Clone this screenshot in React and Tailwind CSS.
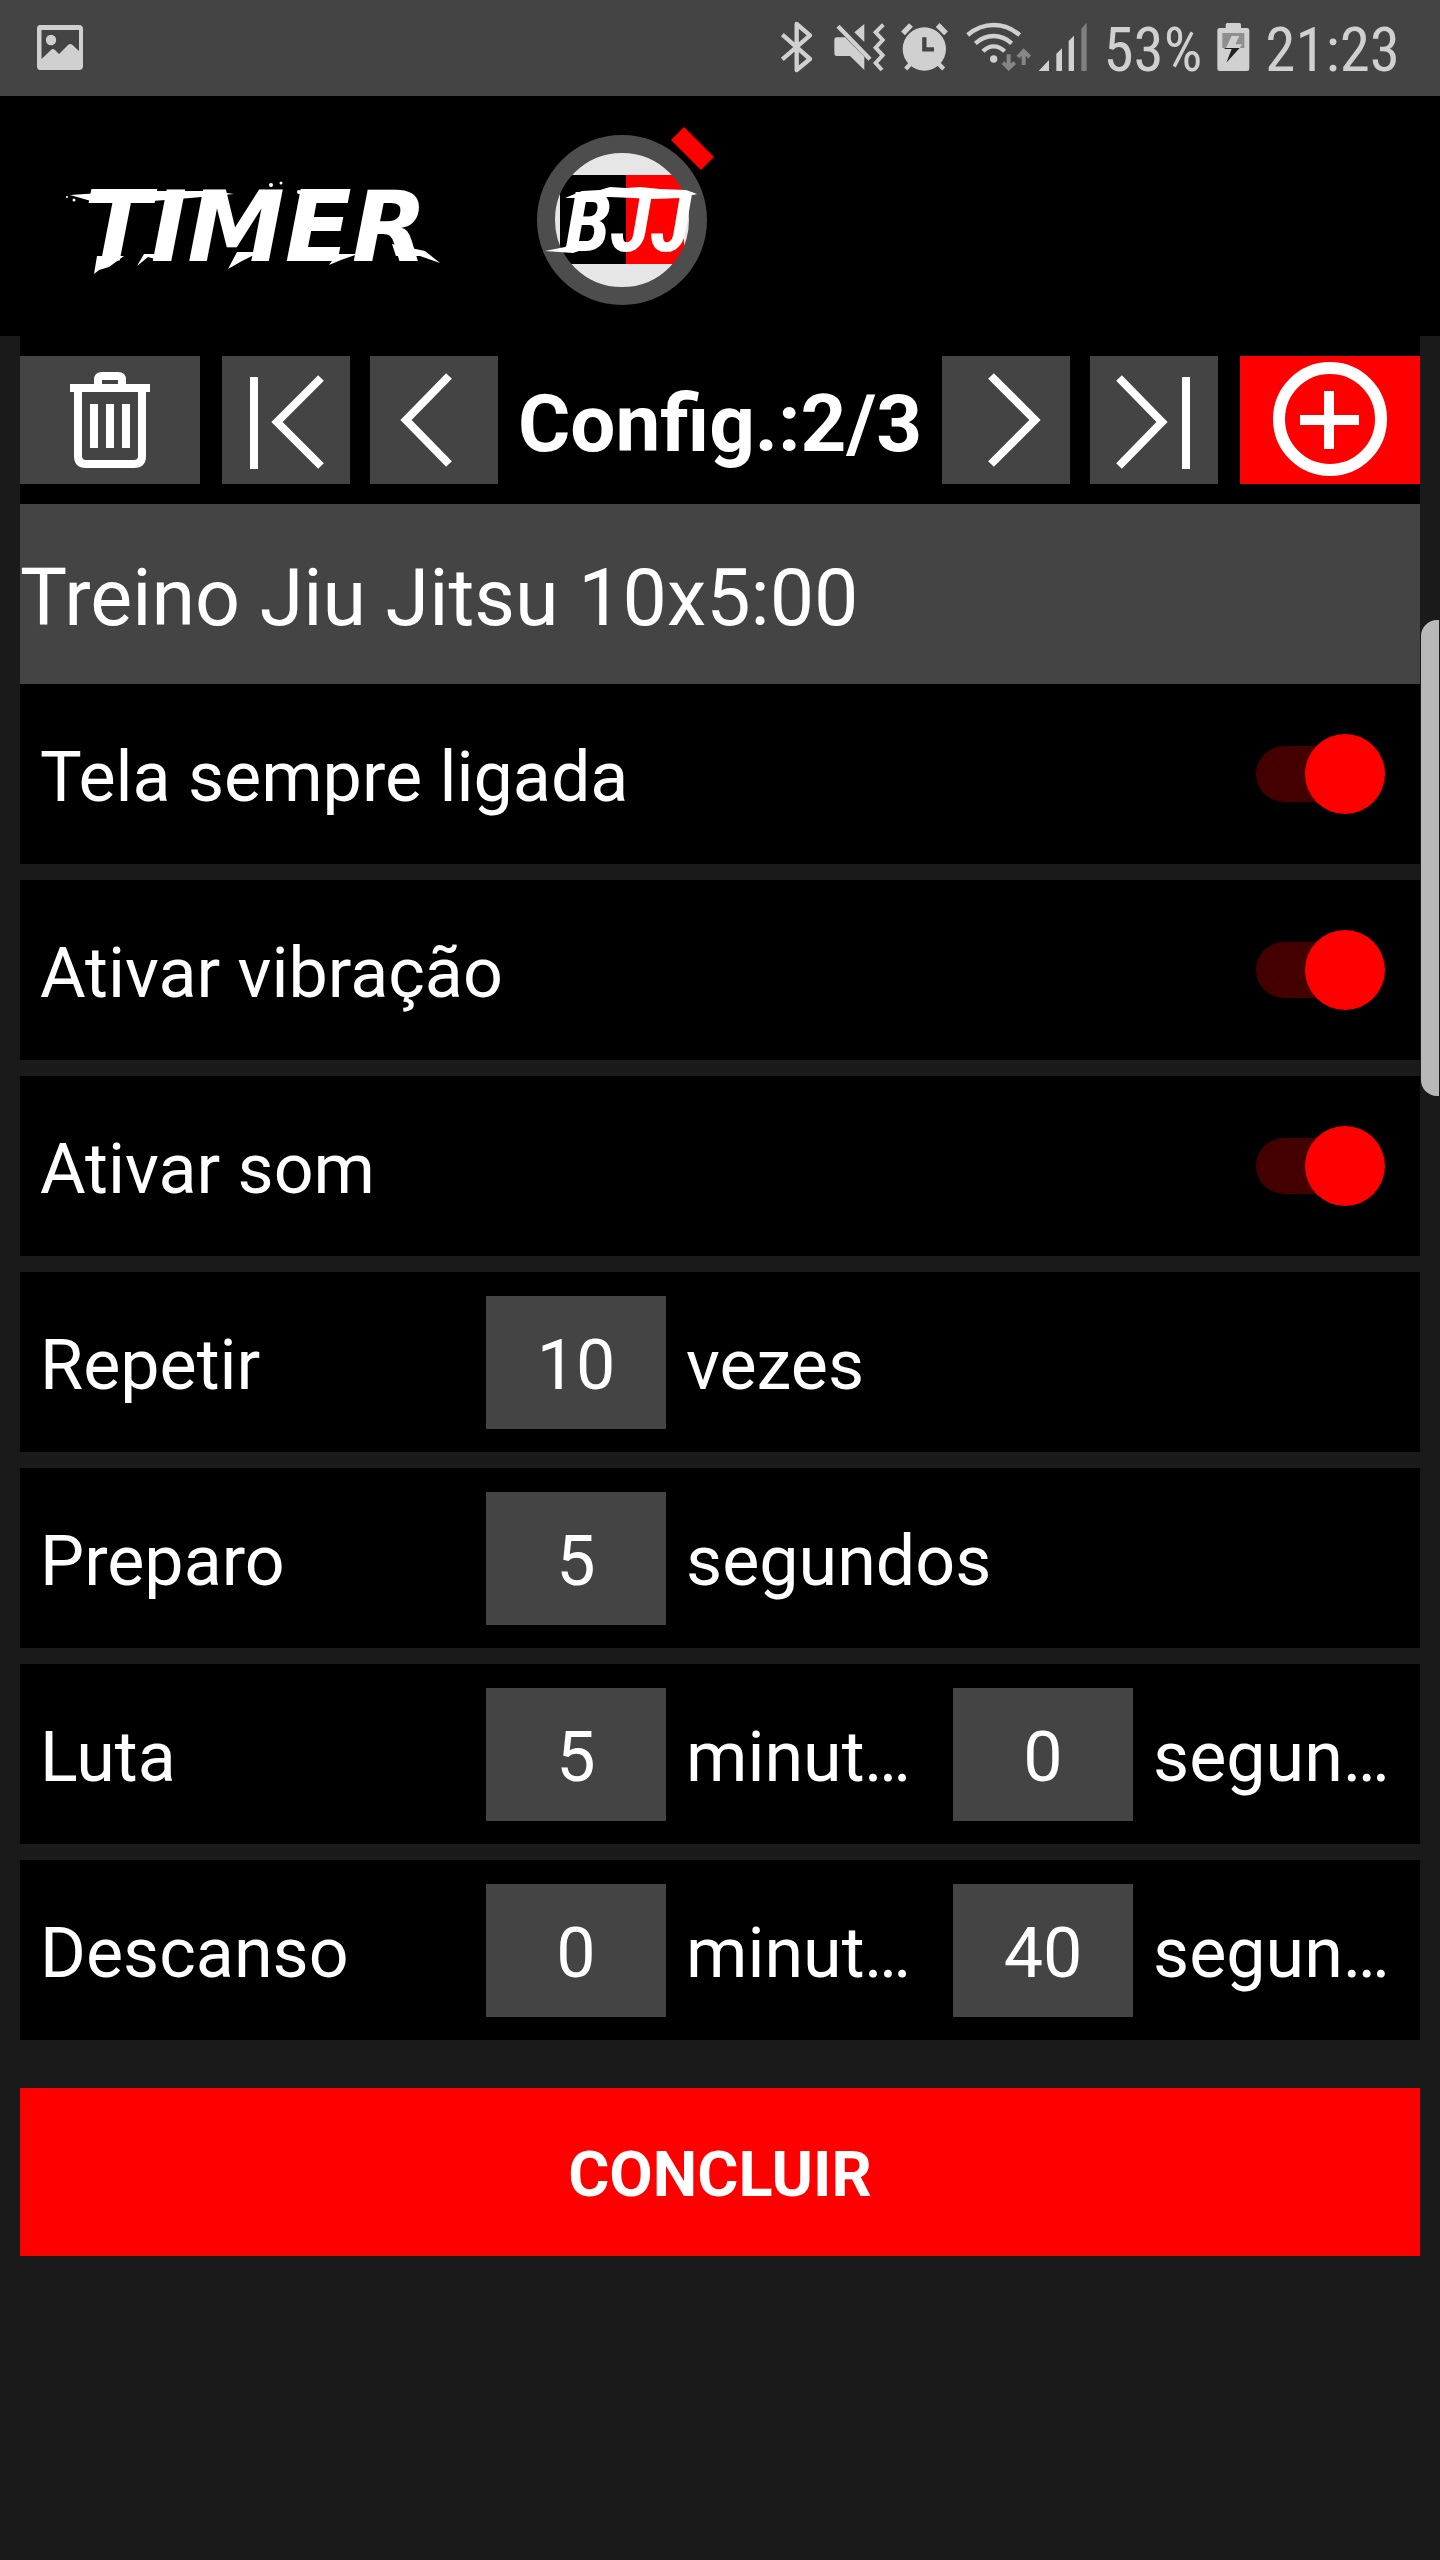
import React, { useState } from 'react';

const ImageIcon = () => (
  <svg className="w-12 h-12" viewBox="0 0 48 48" fill="currentColor" aria-hidden="true">
    <path
      fillRule="evenodd"
      d="M4 1H43Q47 1 47 5V42Q47 46 43 46H4Q1 46 1 42V5Q1 1 4 1ZM5.500 6V35L15 26Q17 24 19 26L23 30L32 21Q34 19 36.500 21L43 27V6Z"
    />
    <circle cx="15" cy="16" r="5.200" />
  </svg>
);

const SignalIcons = () => (
  <svg className="w-[308px] h-24" viewBox="27 -30 924 288" fill="none" stroke="currentColor" strokeWidth="13" aria-hidden="true">
    {/* Bluetooth */}
    <path d="M34 74L117 147L77 180V42L117 76L34 148" strokeLinejoin="round" />

    {/* Muted speaker with vibration */}
    <g fill="currentColor" stroke="none">
      <path d="M197 82H222L280 140V180L237 138H197Q190 138 190 131V89Q190 82 197 82Z" />
      <path d="M280 42V96L250 67Z" />
    </g>
    <path d="M201 49L297 148" />
    <path d="M337 44L314 67L335 90L314 113L335 136L314 159L333 180" strokeWidth="12" />

    {/* Alarm clock */}
    <circle cx="460" cy="117" r="65" fill="currentColor" stroke="none" />
    <path d="M396 70L420 45M500 45L525 70" strokeWidth="16" />
    <path d="M404 177L430 150M518 177L492 150" />
    <path d="M460 82V118H489" stroke="#444" />

    {/* Wi-fi */}
    <path d="M590 75Q625 45 668 45T746 75M613 100Q638 78 668 78T722 100M636 124Q650 109 668 109T701 124" />
    <circle cx="668" cy="147" r="11" fill="currentColor" stroke="none" />
    <path d="M713 133V175M696 158L713 175L731 158M758 165V123M741 141L758 123L776 141" stroke="#868686" strokeWidth="12" />

    {/* Mobile signal */}
    <path d="M803 183L834 150V183ZM856 183V131L873 115V183ZM893 183V93L909 77V183Z" fill="currentColor" stroke="none" />
    <path d="M931 183V56L947 38V183Z" fill="#808080" stroke="none" />
  </svg>
);

const BatteryIcon = () => (
  <svg className="w-[33px] h-24" viewBox="383 -30 99 288" aria-hidden="true">
    <path d="M409 54V44Q409 39 414 39H450Q455 39 455 44V54H473Q480 54 480 61V176Q480 183 473 183H391Q384 183 384 176V61Q384 54 391 54Z" fill="currentColor" />
    <path d="M399 69H465V114H399Z" fill="#8f8f8f" />
    <path d="M427 78H450L438 103H459L451 114H410Z" fill="currentColor" />
    <path d="M406 114H451L411 158L427 117H406Z" fill="#222" />
  </svg>
);

const StatusBar = () => (
  <div className="h-24 bg-[#444] pl-9 pr-10 flex items-center justify-between text-[#d0d0d0]">
    <ImageIcon />
    <div className="flex items-center gap-[15px] font-['Roboto_Condensed',Roboto,sans-serif] text-[61px] leading-none">
      <SignalIcons />
      <span className="pt-1">53%</span>
      <BatteryIcon />
      <span className="pt-1">21:23</span>
    </div>
  </div>
);

const Header = () => (
  <header className="bg-black">
    <svg className="w-[740px] h-60" viewBox="0 0 740 240" fill="#fff" role="img" aria-label="Timer BJJ">
      <text x="84" y="165" fontSize="98" fontWeight="bold" fontStyle="italic" fontFamily="DejaVu Sans">
        TIMER
      </text>
      {/* Brush streaks and drips */}
      <path d="M70 99L100 97L128 95L212 95L234 98L190 102L128 107L98 107L84 103Z" />
      <path d="M94 178L97 160L124 160L109 171L99 174Z" />
      <path d="M137 170L144 158L168 158L155 163L148 161Z" />
      <path d="M228 173L237 156L260 156L242 165Z" />
      <path d="M329 169L337 158L358 158L341 164Z" />
      <path d="M392 148L425 155L440 167L420 160L396 160Z" />
      <circle cx="67" cy="101" r="1" />
      <circle cx="74" cy="104" r="1.500" />
      <circle cx="271" cy="89" r="2" />
      <circle cx="281" cy="87" r="1.500" />
      <circle cx="299" cy="96" r="2" />

      <circle cx="622" cy="124" r="76" fill="#e6e6e6" />
      <path d="M560 79H626V168H560Z" fill="#000" />
      <path d="M626 79H684V168H626Z" fill="#f00" />
      <circle cx="622" cy="124" r="76" fill="none" stroke="#4d4d4d" strokeWidth="18" />
      <path d="M684 31L714 61L701 74L671 44Z" fill="#f00" />
      <text x="565" y="155" fontSize="84" fontWeight="bold" fontStyle="italic" fontFamily="Roboto Condensed, Roboto">
        BJJ
      </text>
      <path d="M565 102L582 95L600 94L610 91L626 92L640 91L660 93L686 94L697 98L680 102L655 103L610 101L580 102Z" />
      <path d="M545 155L565 151L575 145L600 145L588 152L573 157Z" />
    </svg>
  </header>
);

const IconButton = ({ label, wide, red, children }) => (
  <button
    aria-label={label}
    className={`h-32 shrink-0 flex items-center justify-center ${wide ? 'w-[180px]' : 'w-32'} ${red ? 'bg-[#f00]' : 'bg-[#444]'}`}
  >
    <svg
      className="h-32 w-full"
      viewBox={wide ? '0 0 180 128' : '0 0 128 128'}
      fill="none"
      stroke="#fff"
      strokeWidth="8"
      aria-hidden="true"
    >
      {children}
    </svg>
  </button>
);

const Toolbar = () => (
  <div className="bg-black py-5 flex items-center gap-[22px]">
    <IconButton label="Excluir" wide>
      <path d="M78 30V24Q78 20 82 20H98Q102 20 102 24V30M50 32H130M58 34V100Q58 108 66 108H114Q122 108 122 100V34M74 48V92M90 48V92M106 48V92" />
    </IconButton>
    <nav className="grow flex items-center gap-5">
      <IconButton label="Primeira">
        <path d="M32 21V113M99 22L55 66L99 110" />
      </IconButton>
      <IconButton label="Anterior">
        <path d="M79 20L36 64L79 108" />
      </IconButton>
      <h1 className="grow pt-2 text-center text-[80px] leading-none font-bold whitespace-nowrap">Config.:2/3</h1>
      <IconButton label="Próxima">
        <path d="M49 20L93 64L49 108" />
      </IconButton>
      <IconButton label="Última">
        <path d="M29 22L72 66L29 110M96 21V113" />
      </IconButton>
    </nav>
    <IconButton label="Adicionar" wide red>
      <circle cx="90" cy="63" r="51" strokeWidth="12" />
      <path d="M60 64H119M89 35V93" strokeWidth="10" />
    </IconButton>
  </div>
);

const ToggleRow = ({ label }) => {
  const [on, setOn] = useState(true);
  return (
    <label className="h-[180px] bg-black pl-5 pr-[35px] flex items-center justify-between">
      <span className="pt-1.5">{label}</span>
      <input
        type="checkbox"
        checked={on}
        onChange={() => setOn(!on)}
        className="appearance-none relative w-[129px] h-20 before:absolute before:inset-x-0 before:top-3 before:h-14 before:rounded-full before:bg-[#400] after:absolute after:top-0 after:left-0 after:size-20 after:rounded-full after:bg-[#888] checked:after:left-auto checked:after:right-0 checked:after:bg-[#f00]"
      />
    </label>
  );
};

const TimeRow = ({ label, fields }) => {
  const [values, setValues] = useState(fields.map((f) => f.value));

  const change = (i, value) => {
    setValues(values.map((v, j) => (i === j ? value : v)));
  };

  return (
    <div className="h-[180px] bg-black px-5 grid grid-cols-[minmax(0,426fr)_180px_minmax(0,247fr)_180px_minmax(0,247fr)] gap-x-5 items-center">
      <span className="pt-1.5">{label}</span>
      {fields.map((field, i) => {
        const id = `${label}-${field.unit}`;
        return (
          <React.Fragment key={id}>
            <input
              id={id}
              inputMode="numeric"
              value={values[i]}
              onChange={(e) => change(i, e.target.value)}
              className="w-full h-[133px] pt-1.5 bg-[#444] text-center"
            />
            <label htmlFor={id} className={`pt-1.5 truncate ${fields.length === 1 ? 'col-span-3' : ''}`}>
              {field.unit}
            </label>
          </React.Fragment>
        );
      })}
    </div>
  );
};

const toggles = ['Tela sempre ligada', 'Ativar vibração', 'Ativar som'];

const timeRows = [
  { label: 'Repetir', fields: [{ value: '10', unit: 'vezes' }] },
  { label: 'Preparo', fields: [{ value: '5', unit: 'segundos' }] },
  { label: 'Luta', fields: [{ value: '5', unit: 'minutos' }, { value: '0', unit: 'segundos' }] },
  { label: 'Descanso', fields: [{ value: '0', unit: 'minutos' }, { value: '40', unit: 'segundos' }] },
];

const App = () => {
  const [name, setName] = useState('Treino Jiu Jitsu 10x5:00');

  return (
    <div className="relative min-h-screen bg-[#1a1a1a] font-[Roboto,sans-serif] text-white">
      <StatusBar />
      <Header />

      <main className="px-5">
        <Toolbar />
        <input
          className="block w-full h-[180px] pt-2 bg-[#444] text-[79px]"
          aria-label="Nome"
          value={name}
          onChange={(e) => setName(e.target.value)}
        />

        <div className="flex flex-col gap-4 text-[70px]">
          {toggles.map((label) => (
            <ToggleRow key={label} label={label} />
          ))}
          {timeRows.map((row) => (
            <TimeRow key={row.label} label={row.label} fields={row.fields} />
          ))}
        </div>

        <button className="mt-12 h-[168px] w-full pt-1.5 bg-[#f00] text-[63px] font-bold">CONCLUIR</button>
      </main>

      {/* Edge panel handle */}
      <div className="absolute right-px top-[620px] w-[18px] h-[476px] rounded-l-2xl bg-[#b8b8b8]"></div>
    </div>
  );
};

export default App;
